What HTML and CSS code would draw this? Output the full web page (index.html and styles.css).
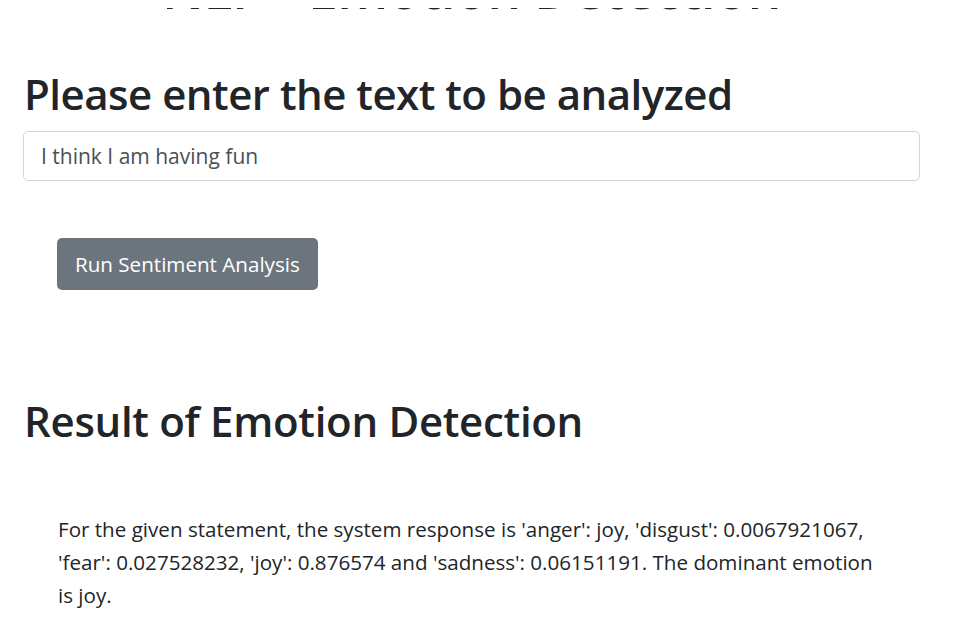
FILE: index.html
```html
<!DOCTYPE html>
<html lang="en">
<head>
<meta charset="utf-8">
<title>NLP - Emotion Detection</title>
<link rel="stylesheet" href="styles.css">
</head>
<body>
<main class="page">
  <div class="title-clip">
    <h1 class="title">NLP - Emotion Detection</h1>
  </div>
  <h1 class="heading prompt">Please enter the text to be analyzed</h1>
  <input class="text-input" type="text" value="I think I am having fun">
  <div class="actions">
    <button class="btn" type="button">Run Sentiment Analysis</button>
  </div>
  <h1 class="heading result-title">Result of Emotion Detection</h1>
  <p class="result">For the given statement, the system response is 'anger': joy, 'disgust': 0.0067921067, 'fear': 0.027528232, 'joy': 0.876574 and 'sadness': 0.06151191. The dominant emotion is joy.</p>
</main>
</body>
</html>
```
FILE: styles.css
```css
* { box-sizing: border-box; }
html, body { margin: 0; padding: 0; background: #fff; }
body {
  font-family: "Open Sans", "Noto Sans", sans-serif;
  color: #212529;
  overflow: hidden;
}
.page {
  display: flex;
  flex-direction: column;
  align-items: flex-start;
  width: 920px;
  padding-left: 23px;
}
.title-clip {
  margin-top: 8px;
  height: 2px;
  overflow: hidden;
  align-self: stretch;
}
.title {
  margin: -50px 0 0;
  font-size: 53.5px;
  line-height: 62px;
  font-weight: 600;
  text-align: center;
  letter-spacing: -0.5px;
}
.heading {
  font-size: 42px;
  line-height: 50px;
  font-weight: 600;
  letter-spacing: -0.5px;
  margin: 0;
  padding-left: 1px;
}
.prompt { margin-top: 59px; }
.text-input {
  margin-top: 12px;
  height: 50px;
  width: 897px;
  border: 1px solid #ced4da;
  border-radius: 5px;
  padding: 0 17px;
  font-family: inherit;
  font-size: 21px;
  color: #495057;
  background: #fff;
  outline: none;
}
.actions {
  display: flex;
  padding: 57px 0 0 34px;
}
.btn {
  height: 52px;
  padding: 0 18px;
  border: none;
  border-radius: 5px;
  background: #6c757d;
  color: #fff;
  font-family: inherit;
  font-size: 20.6px;
}
.result-title {
  margin-top: 106px;
  letter-spacing: -0.3px;
}
.result {
  margin: 67px 0 0 35px;
  width: 825px;
  font-size: 20.6px;
  line-height: 33px;
}
```
